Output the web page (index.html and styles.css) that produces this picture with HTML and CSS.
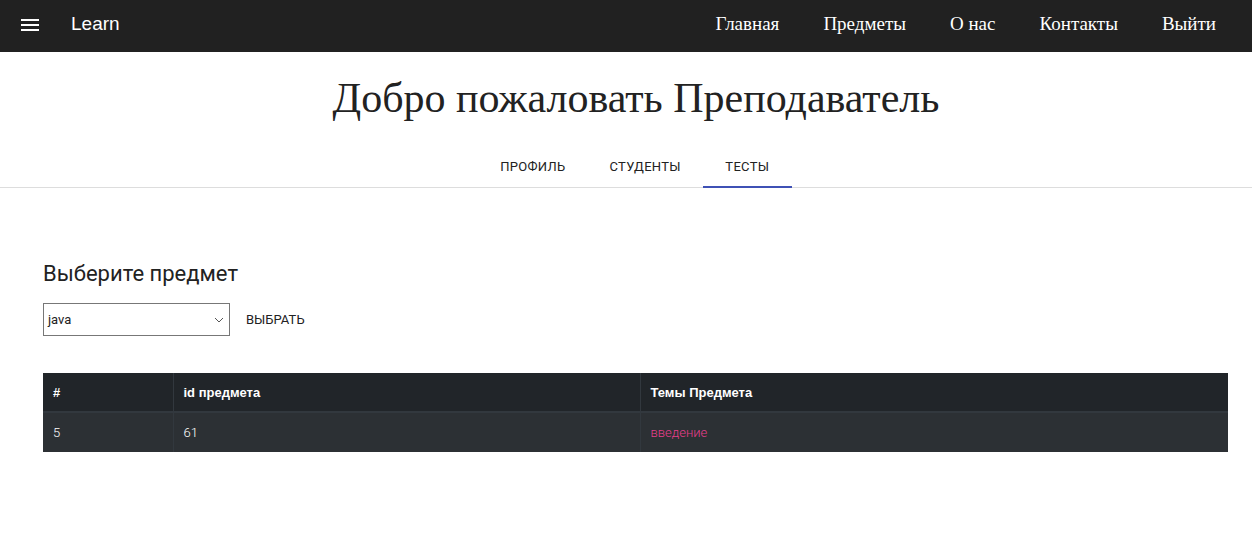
FILE: index.html
```html
<!DOCTYPE html>
<html lang="ru">
<head>
<meta charset="utf-8">
<link rel="stylesheet" href="styles.css">
</head>
<body>
<header class="navbar">
  <div class="brand">
    <svg class="menu-icon" width="18" height="12" viewBox="0 0 18 12"><rect x="0" y="0" width="18" height="2" fill="#fff"/><rect x="0" y="5" width="18" height="2" fill="#fff"/><rect x="0" y="10" width="18" height="2" fill="#fff"/></svg>
    <span class="logo">Learn</span>
  </div>
  <nav class="links">
    <a>Главная</a>
    <a>Предметы</a>
    <a>О нас</a>
    <a>Контакты</a>
    <a>Выйти</a>
  </nav>
</header>
<main>
  <h1 class="title">Добро пожаловать Преподаватель</h1>
  <div class="tabs">
    <div class="tab">ПРОФИЛЬ</div>
    <div class="tab">СТУДЕНТЫ</div>
    <div class="tab active">ТЕСТЫ</div>
  </div>
  <section class="content">
    <h2 class="subtitle">Выберите предмет</h2>
    <div class="form-row">
      <div class="select"><span>java</span>
        <svg width="10" height="6" viewBox="0 0 10 6"><path d="M1 1 L5 5 L9 1" fill="none" stroke="#555" stroke-width="1"/></svg>
      </div>
      <button class="btn">ВЫБРАТЬ</button>
    </div>
    <table class="tbl">
      <thead>
        <tr><th class="c1">#</th><th class="c2">id предмета</th><th>Темы Предмета</th></tr>
      </thead>
      <tbody>
        <tr><td>5</td><td>61</td><td class="pink">введение</td></tr>
      </tbody>
    </table>
  </section>
</main>
</body>
</html>
```
FILE: styles.css
```css
* { box-sizing: border-box; }
body { margin: 0; background: #fff; font-family: Roboto, "Liberation Sans", sans-serif; }
.navbar { height: 52px; background: #212121; display: flex; align-items: center; justify-content: space-between; padding: 0 36px 4px 21px; }
.brand { display: flex; align-items: center; }
.menu-icon { display: block; margin-top: 1px; }
.logo { color: #fff; font-family: "Liberation Sans", Arial, sans-serif; font-size: 19px; margin-left: 32px; }
.links { display: flex; gap: 44px; }
.links a { color: #fff; font-family: "Liberation Serif", "Times New Roman", serif; font-size: 19px; }
.title { margin: 21px 0 0; padding-left: 20px; text-align: center; font-family: "Liberation Serif", "Times New Roman", serif; font-weight: normal; font-size: 42px; line-height: 50px; color: #222; }
.tabs { display: flex; justify-content: center; margin-top: 27px; padding-left: 18px; border-bottom: 1px solid #ddd; height: 38px; }
.tab { font-size: 13px; letter-spacing: 0.3px; color: #222; padding: 0 22px; line-height: 34px; height: 37px; }
.tab.active { border-bottom: 2px solid #3f51b5; height: 38px; padding: 0 22.5px; }
.content { padding: 73px 24px 0 43px; }
.subtitle { margin: 0; font-size: 22px; font-weight: normal; color: #222; line-height: 26px; }
.form-row { display: flex; align-items: center; margin-top: 16px; }
.select { width: 187px; height: 33px; border: 1px solid #777; display: flex; align-items: center; justify-content: space-between; padding: 0 5px 0 4px; font-size: 13px; color: #222; }
.btn { background: none; border: 0; font-family: Roboto, "Liberation Sans", sans-serif; font-size: 13px; color: #222; margin-left: 8px; padding: 0 8px; }
.tbl { margin-top: 37px; width: 1185px; border-collapse: collapse; color: #fff; font-size: 13px; }
.tbl th { background: #212529; text-align: left; font-family: "Liberation Sans", Arial, sans-serif; font-weight: bold; font-size: 13px; height: 39px; padding: 0 10px; border-left: 1px solid #32383e; border-bottom: 2px solid #32383e; }
.tbl td { background: #2c3034; height: 40px; padding: 0 10px; border-left: 1px solid #32383e; font-weight: 300; }
.tbl th:first-child, .tbl td:first-child { border-left: 0; }
.c1 { width: 130px; }
.c2 { width: 467px; }
.pink { color: #e83e8c; }
```
